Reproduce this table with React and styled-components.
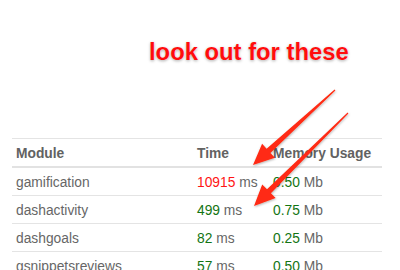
import styled, { createGlobalStyle } from 'styled-components';

const GlobalStyle = createGlobalStyle`
  html, body {
    margin: 0;
    padding: 0;
    background: #fff;
  }
  body {
    font-family: "Liberation Sans", Arial, Helvetica, sans-serif;
    overflow: hidden;
  }
`;

const Page = styled.div`
  position: relative;
  width: 400px;
  height: 270px;
  overflow: hidden;
  padding-top: 37px;
  box-sizing: border-box;
`;

const Callout = styled.h1`
  margin: 0 0 0 149px;
  font-size: 23.8px;
  line-height: 30px;
  font-weight: bold;
  color: #ff0d0d;
  text-shadow: 0 0 1px #fff, 0 1px 3px rgba(0, 0, 0, 0.35);
  white-space: nowrap;
`;

const Table = styled.table`
  margin: 71px 0 0 12px;
  width: 370px;
  table-layout: fixed;
  border-collapse: collapse;
  font-size: 13.8px;
  line-height: 16px;
  color: #666;
`;

const Th = styled.th`
  text-align: left;
  font-weight: bold;
  color: #626262;
  height: 25px;
  padding: 2px 0 0 4px;
  border-top: 1px solid #e4e4e4;
  border-bottom: 2px solid #e2e2e2;
  white-space: nowrap;
  width: ${(p) => p.$w || 'auto'};
`;

const Td = styled.td`
  height: 24px;
  padding: 3px 0 0 4px;
  border-bottom: 1px solid #e4e4e4;
  white-space: nowrap;
  vertical-align: middle;
`;

const Value = styled.span`
  color: ${(p) => (p.$bad ? '#ff1414' : '#137513')};
`;

const Overlay = styled.svg`
  position: absolute;
  left: 0;
  top: 0;
  pointer-events: none;
`;

const rows = [
  { name: 'gamification', time: 10915, mem: '0.50', slow: true },
  { name: 'dashactivity', time: 499, mem: '0.75' },
  { name: 'dashgoals', time: 82, mem: '0.25' },
  { name: 'gsnippetsreviews', time: 57, mem: '0.50' },
];

function arrowPoints(sx, sy, tx, ty) {
  const dx = tx - sx;
  const dy = ty - sy;
  const len = Math.hypot(dx, dy);
  const ux = dx / len;
  const uy = dy / len;
  const nx = -uy;
  const ny = ux;
  const headLen = 21;
  const headW = 9.5;
  const bx = tx - ux * headLen;
  const by = ty - uy * headLen;
  const tail = 0.6;
  const neck = 2.8;
  const pts = [
    [sx + nx * tail, sy + ny * tail],
    [bx + nx * neck, by + ny * neck],
    [bx + nx * headW, by + ny * headW],
    [tx, ty],
    [bx - nx * headW, by - ny * headW],
    [bx - nx * neck, by - ny * neck],
    [sx - nx * tail, sy - ny * tail],
  ];
  return pts.map((p) => p.map((v) => v.toFixed(1)).join(',')).join(' ');
}

function Arrow({ from, to }) {
  return <polygon points={arrowPoints(from[0], from[1], to[0], to[1])} />;
}

export default function App() {
  return (
    <Page>
      <GlobalStyle />
      <Callout>look out for these</Callout>
      <Table>
        <thead>
          <tr>
            <Th $w="177px">Module</Th>
            <Th $w="72px">Time</Th>
            <Th>Memory Usage</Th>
          </tr>
        </thead>
        <tbody>
          {rows.map((r) => (
            <tr key={r.name}>
              <Td>{r.name}</Td>
              <Td>
                <Value $bad={r.slow}>{r.time}</Value> ms
              </Td>
              <Td>
                <Value>{r.mem}</Value> Mb
              </Td>
            </tr>
          ))}
        </tbody>
      </Table>
      <Overlay width="400" height="270" viewBox="0 0 400 270">
        <defs>
          <filter id="shadow" x="-20%" y="-20%" width="140%" height="140%">
            <feDropShadow dx="0.5" dy="1" stdDeviation="0.8" floodColor="#000" floodOpacity="0.3" />
          </filter>
        </defs>
        <g fill="#ff2a12" filter="url(#shadow)">
          <Arrow from={[335, 90]} to={[253, 165]} />
          <Arrow from={[348, 113]} to={[254, 206]} />
        </g>
      </Overlay>
    </Page>
  );
}
